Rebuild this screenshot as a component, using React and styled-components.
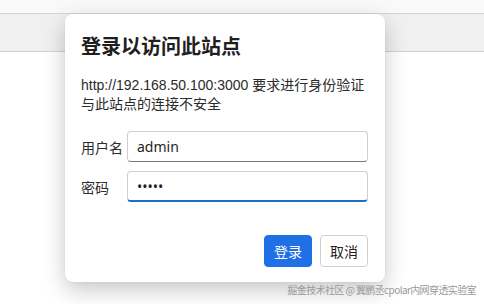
import React from "react";
import styled, { createGlobalStyle } from "styled-components";

const GlobalStyle = createGlobalStyle`
  html, body { margin: 0; padding: 0; background: #ffffff; }
  body {
    font-family: "Liberation Sans", "Noto Sans CJK SC", sans-serif;
    width: 484px;
    height: 304px;
    overflow: hidden;
  }
`;

const Page = styled.div`
  position: relative;
  width: 484px;
  height: 304px;
  background: #ffffff;
  display: flex;
  flex-direction: column;
`;

const TabStrip = styled.div`
  height: 13px;
  background: #f9f9f9;
  border-bottom: 1px solid #d6d6d6;
`;

const Toolbar = styled.div`
  height: 37px;
  background: #f0f0f0;
  border-bottom: 1px solid #d2d2d2;
`;

const Dialog = styled.div`
  position: absolute;
  left: 65px;
  top: 14px;
  width: 320px;
  height: 268px;
  box-sizing: border-box;
  background: #ffffff;
  border-radius: 8px;
  box-shadow: 0 8px 22px rgba(0, 0, 0, 0.22), 0 0 2px rgba(0, 0, 0, 0.08);
  padding: 18px 17px 15px 16px;
  display: flex;
  flex-direction: column;
`;

const Title = styled.h1`
  margin: 0;
  font-size: 20px;
  line-height: 28px;
  font-weight: 700;
  color: #1f1f1f;
  font-family: "Noto Sans CJK SC", sans-serif;
`;

const Desc = styled.p`
  margin: 16px 0 0;
  font-size: 14px;
  line-height: 19px;
  color: #2b2b2b;
`;

const Form = styled.div`
  margin-top: 17px;
  display: grid;
  grid-template-columns: 41px 1fr;
  column-gap: 5px;
  row-gap: 9px;
  align-items: center;
`;

const Label = styled.label`
  font-size: 14px;
  color: #2b2b2b;
  font-family: "Noto Sans CJK SC", sans-serif;
  white-space: nowrap;
`;

const Input = styled.div`
  height: 31px;
  box-sizing: border-box;
  border: 1px solid #cfcfcf;
  border-bottom: ${(p) => (p.$focused ? "2px solid #1f6ccf" : "1px solid #7a7a7a")};
  border-radius: 4px;
  padding: 0 9px;
  display: flex;
  align-items: center;
  font-size: 14px;
  color: #1f1f1f;
  font-family: "Noto Sans", sans-serif;
  background: #ffffff;
`;

const Actions = styled.div`
  margin-top: auto;
  display: flex;
  justify-content: flex-end;
  gap: 8px;
`;

const Button = styled.button`
  width: 48px;
  height: 32px;
  box-sizing: border-box;
  border-radius: 4px;
  font-size: 14px;
  font-family: "Noto Sans CJK SC", sans-serif;
  padding: 0;
  cursor: pointer;
  background: ${(p) => (p.$primary ? "#1f6fe5" : "#ffffff")};
  color: ${(p) => (p.$primary ? "#ffffff" : "#1f1f1f")};
  border: 1px solid ${(p) => (p.$primary ? "#1f6fe5" : "#cfcfcf")};
`;

const Watermark = styled.div`
  position: absolute;
  right: 8px;
  bottom: 8px;
  font-size: 10px;
  line-height: 12px;
  color: #9a9a9a;
  font-family: "Noto Sans CJK SC", sans-serif;
  white-space: nowrap;
  letter-spacing: -0.6px;
`;

export default function App() {
  return (
    <>
      <GlobalStyle />
      <Page>
        <TabStrip />
        <Toolbar />
        <Dialog>
          <Title>登录以访问此站点</Title>
          <Desc>
            http://192.168.50.100:3000 要求进行身份验证
            <br />
            与此站点的连接不安全
          </Desc>
          <Form>
            <Label>用户名</Label>
            <Input>admin</Input>
            <Label>密码</Label>
            <Input $focused>•••••</Input>
          </Form>
          <Actions>
            <Button $primary>登录</Button>
            <Button>取消</Button>
          </Actions>
        </Dialog>
        <Watermark>掘金技术社区 @ 翼鹏丞cpolar内网穿透实验室</Watermark>
      </Page>
    </>
  );
}
